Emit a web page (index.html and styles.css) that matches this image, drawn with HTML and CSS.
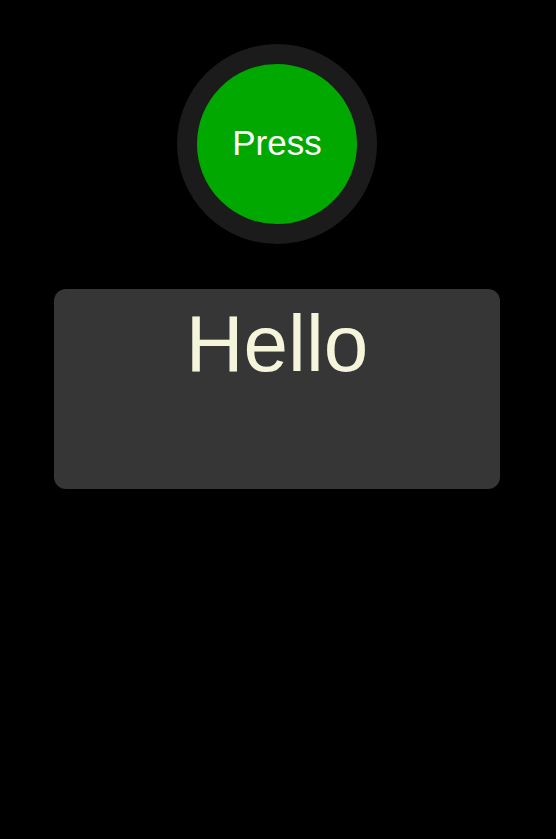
FILE: index.html
```html
<!DOCTYPE html>
<html>
<head>
<meta charset="utf-8">
<link rel="stylesheet" href="styles.css">
</head>
<body>
<main class="page">
  <button class="press">Press</button>
  <div class="panel">
    <div class="hello">Hello</div>
  </div>
</main>
</body>
</html>
```
FILE: styles.css
```css
html, body {
  margin: 0;
  padding: 0;
  background: #000;
}
.page {
  display: flex;
  flex-direction: column;
  align-items: center;
  padding-top: 44px;
  gap: 45px;
  font-family: "Liberation Sans", Arial, sans-serif;
  margin-left: -2px;
}
.press {
  box-sizing: border-box;
  width: 200px;
  height: 200px;
  border-radius: 50%;
  border: 20px solid #1b1b1b;
  background: #00a800;
  color: #fff;
  font-family: "Liberation Sans", Arial, sans-serif;
  font-size: 35px;
  display: flex;
  align-items: center;
  justify-content: center;
  padding: 0 0 2px;
  cursor: pointer;
}
.panel {
  box-sizing: border-box;
  width: 446px;
  height: 200px;
  background: #363636;
  border-radius: 12px;
  padding-top: 9px;
  text-align: center;
}
.hello {
  font-size: 80px;
  color: #f5f5dc;
}
```
